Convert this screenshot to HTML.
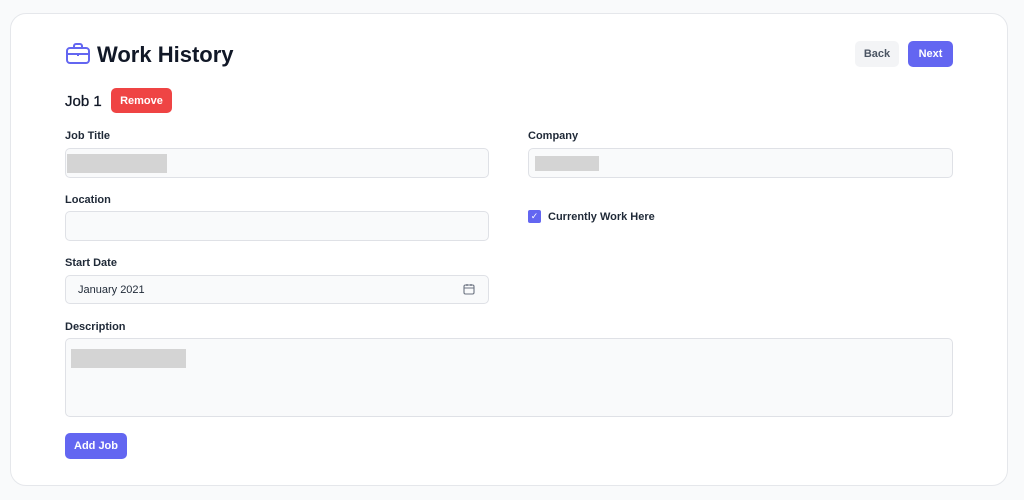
<!DOCTYPE html>
<html><head><style>
*{box-sizing:border-box;margin:0;padding:0}
body{width:1024px;height:500px;background:#f9fafb;font-family:"Liberation Sans",sans-serif;position:relative;overflow:hidden;color:#111827}
.card{position:absolute;left:10px;top:13px;width:998px;height:473px;background:#fff;border:1px solid #e5e7eb;border-radius:16px}
.a{position:absolute}
.lbl{font-size:11px;font-weight:bold;color:#1f2937}
.inp{position:absolute;background:#f9fafb;border:1px solid #dfe1e6;border-radius:5px}
.ph{position:absolute;background:#d4d4d4}
.btn{position:absolute;border-radius:5px;font-size:11px;font-weight:bold;display:flex;align-items:center;justify-content:center}
</style></head><body>
<div class="card"></div>
<svg class="a" style="left:65px;top:42px" width="26" height="24" viewBox="0 0 26 24" fill="none" stroke="#6366f1" stroke-width="2"><rect x="2" y="6" width="22" height="15" rx="3"/><path d="M9 6V4a2 2 0 0 1 2-2h4a2 2 0 0 1 2 2v2M2 12h22M13 12v2"/></svg>
<div class="a" style="left:97px;top:42px;font-size:22px;font-weight:bold;color:#111827">Work History</div>
<div class="btn" style="left:855px;top:41px;width:44px;height:26px;background:#f3f4f6;color:#4b5563">Back</div>
<div class="btn" style="left:908px;top:41px;width:45px;height:26px;background:#6366f1;color:#fff">Next</div>
<div class="a" style="left:65px;top:93px;font-size:15px;color:#111827;-webkit-text-stroke:0.3px #111827">Job 1</div>
<div class="btn" style="left:111px;top:88px;width:61px;height:25px;background:#ef4444;color:#fff">Remove</div>
<div class="a lbl" style="left:65px;top:130px">Job Title</div>
<div class="inp" style="left:65px;top:148px;width:424px;height:30px"></div>
<div class="ph" style="left:67px;top:154px;width:100px;height:19px"></div>
<div class="a lbl" style="left:528px;top:130px">Company</div>
<div class="inp" style="left:528px;top:148px;width:425px;height:30px"></div>
<div class="ph" style="left:535px;top:156px;width:64px;height:15px"></div>
<div class="a lbl" style="left:65px;top:194px">Location</div>
<div class="inp" style="left:65px;top:211px;width:424px;height:30px"></div>
<div class="a" style="left:528px;top:210px;width:13px;height:13px;background:#6366f1;border-radius:2px;color:#fff;font-size:9px;text-align:center;line-height:13px">✓</div>
<div class="a lbl" style="left:548px;top:211px">Currently Work Here</div>
<div class="a lbl" style="left:65px;top:257px">Start Date</div>
<div class="inp" style="left:65px;top:275px;width:424px;height:29px"></div>
<div class="a" style="left:78px;top:284px;font-size:11px;color:#1f2937">January 2021</div>
<svg class="a" style="left:463px;top:283px" width="12" height="12" viewBox="0 0 12 12" fill="none" stroke="#6b7280" stroke-width="1.1"><rect x="1" y="2" width="10" height="9" rx="1.5"/><path d="M1 5h10M4 1v2M8 1v2"/></svg>
<div class="a lbl" style="left:65px;top:321px">Description</div>
<div class="inp" style="left:65px;top:338px;width:888px;height:79px"></div>
<div class="ph" style="left:71px;top:349px;width:115px;height:19px"></div>
<div class="btn" style="left:65px;top:433px;width:62px;height:26px;background:#6366f1;color:#fff">Add Job</div>
</body></html>
